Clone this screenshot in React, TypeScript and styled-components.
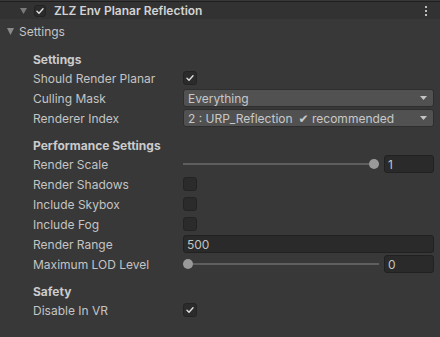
import React from 'react';
import styled, { createGlobalStyle } from 'styled-components';

const GlobalStyle = createGlobalStyle`
  html, body {
    margin: 0;
    padding: 0;
    background: #383838;
  }
  body {
    font-family: Inter, 'Noto Sans', 'DejaVu Sans', sans-serif;
    font-size: 12px;
    color: #c4c4c4;
  }
`;

const Inspector = styled.div`
  width: 440px;
  height: 337px;
  padding-top: 1px;
  background: #383838;
  overflow: hidden;
  box-sizing: border-box;
`;

const ComponentHeader = styled.div`
  height: 17px;
  border-top: 1px solid #1f1f1f;
  background: #323232;
  display: flex;
  align-items: center;
  padding-left: 20px;
  gap: 7px;
  > .title {
    font-weight: 600;
    color: #d2d2d2;
    margin-left: 1px;
  }
  > .menu {
    margin-left: auto;
    margin-right: 13px;
    display: flex;
    flex-direction: column;
    gap: 2px;
    > span {
      width: 2px;
      height: 2px;
      background: #bdbdbd;
    }
  }
`;

const Foldout = styled.div`
  height: 18px;
  margin-top: 3px;
  display: flex;
  align-items: center;
  padding-left: 7px;
  gap: 5px;
`;

const Body = styled.div`
  padding: 12px 6px 0 33px;
`;

const Section = styled.div`
  & + & {
    margin-top: 10px;
  }
`;

const SectionTitle = styled.div`
  height: 16px;
  line-height: 16px;
  font-weight: 700;
  color: #cbcbcb;
`;

const Row = styled.div`
  height: 20px;
  display: grid;
  grid-template-columns: 150px 1fr;
  align-items: center;
`;

const Label = styled.div`
  white-space: nowrap;
`;

const Box = styled.div<{ $size?: number }>`
  width: ${(p) => p.$size ?? 14}px;
  height: ${(p) => p.$size ?? 14}px;
  box-sizing: border-box;
  border: 1px solid #232323;
  border-radius: 3px;
  background: #2b2b2b;
  display: flex;
  align-items: center;
  justify-content: center;
`;

const Popup = styled.div`
  height: 18px;
  box-sizing: border-box;
  border: 1px solid #2e2e2e;
  border-radius: 3px;
  background: #515151;
  display: flex;
  align-items: center;
  padding: 0 6px 0 4px;
  color: #c8c8c8;
  > .hint {
    margin-left: 6px;
  }
  > svg {
    margin-left: auto;
  }
`;

const TextField = styled.div<{ $width?: number }>`
  height: 18px;
  box-sizing: border-box;
  ${(p) => (p.$width ? `width: ${p.$width}px; flex: none;` : '')}
  border: 1px solid #212121;
  border-radius: 3px;
  background: #2a2a2a;
  display: flex;
  align-items: center;
  padding-left: 3px;
  color: #c4c4c4;
`;

const SliderWrap = styled.div`
  display: flex;
  align-items: center;
  gap: 5px;
`;

const Track = styled.div`
  flex: 1;
  height: 10px;
  position: relative;
  &:before {
    content: '';
    position: absolute;
    left: 0;
    right: 0;
    top: 4px;
    height: 2px;
    background: #5e5e5e;
  }
`;

const Thumb = styled.div`
  position: absolute;
  top: 0;
  width: 10px;
  height: 10px;
  border-radius: 50%;
  background: #999999;
`;

const Check = ({ size = 8 }: { size?: number }) => (
  <svg width={size} height={size} viewBox="0 0 8 8">
    <polyline points="1,4.2 3,6.2 7,1.8" fill="none" stroke="#e0e0e0" strokeWidth="1.4" strokeLinecap="round" strokeLinejoin="round" />
  </svg>
);

const DownArrow = ({ color = '#c4c4c4', w = 7, h = 4 }: { color?: string; w?: number; h?: number }) => (
  <svg width={w} height={h} viewBox={`0 0 ${w} ${h}`}>
    <polygon points={`0,0 ${w},0 ${w / 2},${h}`} fill={color} />
  </svg>
);

const Toggle = ({ on }: { on?: boolean }) => <Box>{on && <Check />}</Box>;

const Slider = ({ value, text }: { value: number; text: string }) => (
  <SliderWrap>
    <Track>
      <Thumb style={{ left: `calc(${value * 100}% - ${value * 10}px)` }} />
    </Track>
    <TextField $width={50}>{text}</TextField>
  </SliderWrap>
);

export default function App() {
  return (
    <>
      <GlobalStyle />
      <Inspector>
        <ComponentHeader>
          <DownArrow color="#7a7a7a" w={7} h={6} />
          <Box $size={12}>
            <Check size={8} />
          </Box>
          <span className="title">ZLZ Env Planar Reflection</span>
          <div className="menu">
            <span />
            <span />
            <span />
          </div>
        </ComponentHeader>

        <Foldout>
          <DownArrow color="#8a8a8a" w={7} h={7} />
          <span>Settings</span>
        </Foldout>

        <Body>
          <Section>
            <SectionTitle>Settings</SectionTitle>
            <Row>
              <Label>Should Render Planar</Label>
              <Toggle on />
            </Row>
            <Row>
              <Label>Culling Mask</Label>
              <Popup>
                Everything
                <DownArrow />
              </Popup>
            </Row>
            <Row>
              <Label>Renderer Index</Label>
              <Popup>
                2 : URP_Reflection
                <span className="hint">✔ recommended</span>
                <DownArrow />
              </Popup>
            </Row>
          </Section>

          <Section>
            <SectionTitle>Performance Settings</SectionTitle>
            <Row>
              <Label>Render Scale</Label>
              <Slider value={1} text="1" />
            </Row>
            <Row>
              <Label>Render Shadows</Label>
              <Toggle />
            </Row>
            <Row>
              <Label>Include Skybox</Label>
              <Toggle />
            </Row>
            <Row>
              <Label>Include Fog</Label>
              <Toggle />
            </Row>
            <Row>
              <Label>Render Range</Label>
              <TextField>500</TextField>
            </Row>
            <Row>
              <Label>Maximum LOD Level</Label>
              <Slider value={0} text="0" />
            </Row>
          </Section>

          <Section>
            <SectionTitle>Safety</SectionTitle>
            <Row>
              <Label>Disable In VR</Label>
              <Toggle on />
            </Row>
          </Section>
        </Body>
      </Inspector>
    </>
  );
}
